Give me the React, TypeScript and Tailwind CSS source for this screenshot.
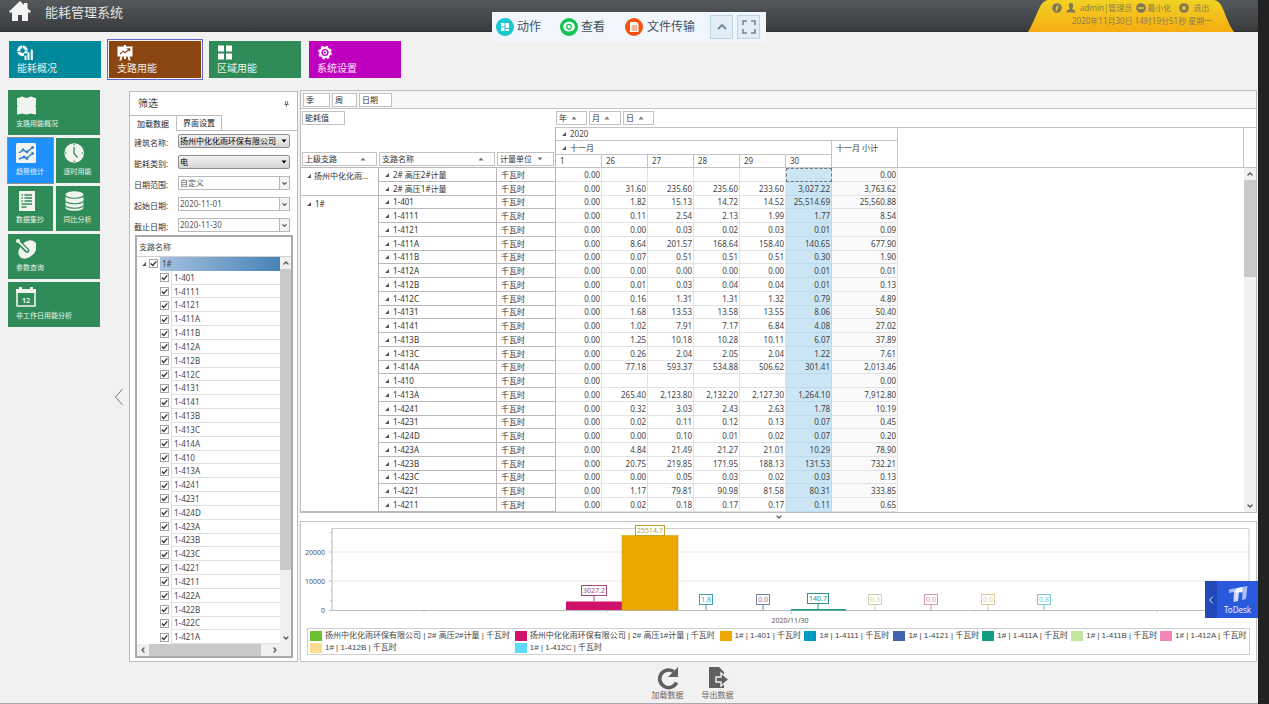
import React from 'react';
import { ChevronDown, ChevronLeft, ChevronRight, ChevronUp } from 'lucide-react';
import clsx from 'clsx';

interface PivotRow {
  name: string;
  values: string[];
}

const DAYS = ['1', '26', '27', '28', '29', '30'];

// values: one per day column, then the month subtotal
const ROWS: PivotRow[] = [
  { name: '2# 高压2#计量', values: ['0.00', '', '', '', '', '', '0.00'] },
  { name: '2# 高压1#计量', values: ['0.00', '31.60', '235.60', '235.60', '233.60', '3,027.22', '3,763.62'] },
  { name: '1-401', values: ['0.00', '1.82', '15.13', '14.72', '14.52', '25,514.69', '25,560.88'] },
  { name: '1-4111', values: ['0.00', '0.11', '2.54', '2.13', '1.99', '1.77', '8.54'] },
  { name: '1-4121', values: ['0.00', '0.00', '0.03', '0.02', '0.03', '0.01', '0.09'] },
  { name: '1-411A', values: ['0.00', '8.64', '201.57', '168.64', '158.40', '140.65', '677.90'] },
  { name: '1-411B', values: ['0.00', '0.07', '0.51', '0.51', '0.51', '0.30', '1.90'] },
  { name: '1-412A', values: ['0.00', '0.00', '0.00', '0.00', '0.00', '0.01', '0.01'] },
  { name: '1-412B', values: ['0.00', '0.01', '0.03', '0.04', '0.04', '0.01', '0.13'] },
  { name: '1-412C', values: ['0.00', '0.16', '1.31', '1.31', '1.32', '0.79', '4.89'] },
  { name: '1-4131', values: ['0.00', '1.68', '13.53', '13.58', '13.55', '8.06', '50.40'] },
  { name: '1-4141', values: ['0.00', '1.02', '7.91', '7.17', '6.84', '4.08', '27.02'] },
  { name: '1-413B', values: ['0.00', '1.25', '10.18', '10.28', '10.11', '6.07', '37.89'] },
  { name: '1-413C', values: ['0.00', '0.26', '2.04', '2.05', '2.04', '1.22', '7.61'] },
  { name: '1-414A', values: ['0.00', '77.18', '593.37', '534.88', '506.62', '301.41', '2,013.46'] },
  { name: '1-410', values: ['0.00', '', '', '', '', '', '0.00'] },
  { name: '1-413A', values: ['0.00', '265.40', '2,123.80', '2,132.20', '2,127.30', '1,264.10', '7,912.80'] },
  { name: '1-4241', values: ['0.00', '0.32', '3.03', '2.43', '2.63', '1.78', '10.19'] },
  { name: '1-4231', values: ['0.00', '0.02', '0.11', '0.12', '0.13', '0.07', '0.45'] },
  { name: '1-424D', values: ['0.00', '0.00', '0.10', '0.01', '0.02', '0.07', '0.20'] },
  { name: '1-423A', values: ['0.00', '4.84', '21.49', '21.27', '21.01', '10.29', '78.90'] },
  { name: '1-423B', values: ['0.00', '20.75', '219.85', '171.95', '188.13', '131.53', '732.21'] },
  { name: '1-423C', values: ['0.00', '0.00', '0.05', '0.03', '0.02', '0.03', '0.13'] },
  { name: '1-4221', values: ['0.00', '1.17', '79.81', '90.98', '81.58', '80.31', '333.85'] },
  { name: '1-4211', values: ['0.00', '0.02', '0.18', '0.17', '0.17', '0.11', '0.65'] },
];

const BRANCHES = [...ROWS.slice(2).map((r) => r.name), '1-422A', '1-422B', '1-422C', '1-421A'];

const LEGEND = [
  { label: '扬州中化化雨环保有限公司 | 2# 高压2#计量 | 千瓦时', color: 'bg-[#69c02c]' },
  { label: '扬州中化化雨环保有限公司 | 2# 高压1#计量 | 千瓦时', color: 'bg-[#d1126b]' },
  { label: '1# | 1-401 | 千瓦时', color: 'bg-[#eaa800]' },
  { label: '1# | 1-4111 | 千瓦时', color: 'bg-[#009bc4]' },
  { label: '1# | 1-4121 | 千瓦时', color: 'bg-[#4464b0]' },
  { label: '1# | 1-411A | 千瓦时', color: 'bg-[#149d86]' },
  { label: '1# | 1-411B | 千瓦时', color: 'bg-[#c2e5a0]' },
  { label: '1# | 1-412A | 千瓦时', color: 'bg-[#f287b7]' },
  { label: '1# | 1-412B | 千瓦时', color: 'bg-[#fbdc8c]' },
  { label: '1# | 1-412C | 千瓦时', color: 'bg-[#5cdbfd]' },
];

const CHART_LABELS = [
  { x: 594, y: 585, w: 26, stem: 601, text: '3027.2', color: '#a34a75' },
  { x: 650, y: 525, w: 30, stem: 535, text: '25514.7', color: '#c3a02a' },
  { x: 706, y: 594, w: 14, stem: 610, text: '1.8', color: '#3f9fb2' },
  { x: 763, y: 594, w: 14, stem: 610, text: '0.0', color: '#7580ab' },
  { x: 818, y: 593, w: 22, stem: 609, text: '140.7', color: '#32907f' },
  { x: 875, y: 594, w: 14, stem: 610, text: '0.3', color: '#c5d1b1' },
  { x: 931, y: 594, w: 14, stem: 610, text: '0.0', color: '#d495ae' },
  { x: 988, y: 594, w: 14, stem: 610, text: '0.0', color: '#dccd97' },
  { x: 1044, y: 594, w: 14, stem: 610, text: '0.8', color: '#7cc6d4' },
];

const SORT_UP = (
  <svg viewBox="0 0 6 4" className="h-1 w-1.5 shrink-0" fill="#777">
    <path d="M3 0.500L5.500 3.500h-5z" />
  </svg>
);

const SORT_DOWN = (
  <svg viewBox="0 0 6 4" className="h-1 w-1.5 shrink-0" fill="#777">
    <path d="M0.500 0.500h5L3 3.500z" />
  </svg>
);

const Expander = () => (
  <svg viewBox="0 0 5 5" className="h-1 w-1 shrink-0" fill="#555">
    <path d="M5 0v5H0z" />
  </svg>
);

const Header = () => (
  <header className="relative flex h-8 items-start bg-gradient-to-b from-[#55585b] to-[#3a3c3e] border-b border-[#2c2d2e] pl-2">
    <svg viewBox="0 0 24 22" className="h-[22px] w-6" fill="#f4f4f4">
      <path d="M12 1L1 11.500l1.600 1.600L4 12v9h6v-6h4v6h6v-9l1.400 1.100L23 11.500l-3.500-3.300V3h-3.500v2z" />
    </svg>
    <h1 className="ml-[13px] mt-[3px] text-[13px] leading-[18px] text-[#e4e4e4]">能耗管理系统</h1>

    <div className="absolute right-6 top-0 h-8 w-[206px]">
      <svg viewBox="0 0 206 32" className="absolute inset-0 h-full w-full" preserveAspectRatio="none">
        <defs>
          <linearGradient id="tab" x1="0" y1="0" x2="0" y2="1">
            <stop offset="0" stopColor="#f2d223" />
            <stop offset="1" stopColor="#f5ac12" />
          </linearGradient>
        </defs>
        <path d="M0 32C6 22 9 12 13 5C15 2 17 0 21 0H185C189 0 191 2 193 5C197 12 200 24 206 32z" fill="url(#tab)" />
      </svg>
      <div className="relative flex h-4 items-center pl-6 text-[8px] text-[#8b7d4c]">
        <svg viewBox="0 0 10 10" className="h-2.5 w-2.5">
          <circle cx="5" cy="5" r="4.800" fill="#80775a" />
          <path d="M6 2.200L4 8M5.500 4.200H4.200" stroke="#f2cc25" strokeWidth="1.300" />
        </svg>
        <svg viewBox="0 0 10 10" className="ml-1 h-2.5 w-2.5" fill="#80775a">
          <path d="M5 0c1.700 0 2.400 1.200 2.200 2.700C7 4.200 6.500 5 6.200 5.500c0 1 3.300 1.200 3.300 4H.5c0-2.800 3.300-3 3.300-4C3.500 5 3 4.200 2.800 2.700 2.600 1.200 3.300 0 5 0z" />
        </svg>
        <span className="ml-1 whitespace-nowrap">admin|管理员</span>
        <button type="button" className="ml-1 flex items-center whitespace-nowrap">
          <svg viewBox="0 0 10 10" className="mr-px h-2.5 w-2.5">
            <circle cx="5" cy="5" r="4.800" fill="#80775a" />
            <path d="M2.300 5h5.400" stroke="#f2cc25" strokeWidth="1.600" />
          </svg>
          最小化
        </button>
        <button type="button" className="ml-2 flex items-center whitespace-nowrap">
          <svg viewBox="0 0 10 10" className="mr-1 h-2.5 w-2.5">
            <circle cx="5" cy="5" r="4.800" fill="#80775a" />
            <path d="M3.200 3.200l3.600 3.600M6.800 3.200L3.200 6.800" stroke="#f2cc25" strokeWidth="1.400" />
          </svg>
          退出
        </button>
      </div>
      <p className="relative whitespace-nowrap pl-11 text-[8px] leading-[10px] text-[#8b7d4c]">
        2020年11月30日 14时19分51秒 星期一
      </p>
    </div>

    <RemoteBar />
  </header>
);

// floating toolbar of the remote session
const RemoteBar = () => (
  <div className="absolute left-1/2 top-3 z-10 flex h-[30px] w-[274px] -translate-x-1/2 items-center bg-[#f1f6fd] pl-1 text-[12px] text-[#44525e]">
    <button type="button" className="flex items-center gap-[3px] whitespace-nowrap">
      <svg viewBox="0 0 18 18" className="h-[18px] w-[18px]">
        <circle cx="9" cy="9" r="9" fill="#16c8cf" />
        <path d="M5 5h3.500v3.500H5zM9.500 5H13v5H9.500zM5 9.500h3.500V13H5zM9.500 11H13v2H9.500z" fill="#fff" />
      </svg>
      动作
    </button>
    <button type="button" className="ml-[19px] flex items-center gap-[3px] whitespace-nowrap">
      <svg viewBox="0 0 18 18" className="h-[18px] w-[18px]">
        <circle cx="9" cy="9" r="9" fill="#12c452" />
        <ellipse cx="9" cy="8.700" rx="5.800" ry="4.900" fill="#fff" />
        <circle cx="9" cy="8.700" r="2.300" fill="#fff" stroke="#12c452" strokeWidth="1.300" />
      </svg>
      查看
    </button>
    <button type="button" className="ml-5 flex items-center gap-1 whitespace-nowrap">
      <svg viewBox="0 0 18 18" className="h-[18px] w-[18px]">
        <circle cx="9" cy="9" r="9" fill="#f1540f" />
        <path d="M5 4h6.500L13.500 6v8H5z" fill="#fff" />
        <path d="M6.500 8h5.500M6.500 10h5.500M6.500 12h5.500" stroke="#f1540f" strokeWidth="0.900" />
      </svg>
      文件传输
    </button>
    <button type="button" aria-label="收起" className="ml-auto flex h-6 w-[23px] items-center justify-center border border-[#bcd3e3] bg-[#e2edf6]">
      <svg viewBox="0 0 12 8" className="h-2 w-3" fill="none" stroke="#6d8798" strokeWidth="1.800">
        <path d="M2 6l4-4 4 4" />
      </svg>
    </button>
    <button type="button" aria-label="全屏" className="ml-1 mr-1.5 flex h-6 w-[23px] items-center justify-center border border-[#bcd3e3] bg-[#e2edf6]">
      <svg viewBox="0 0 14 14" className="h-3.5 w-3.5" fill="none" stroke="#6d8798" strokeWidth="1.600">
        <path d="M1 5V1h4M9 1h4v4M13 9v4H9M5 13H1V9" />
      </svg>
    </button>
  </div>
);

interface TopTileProps {
  label: string;
  className: string;
  active?: boolean;
  children: React.ReactNode;
}

const TopTile: React.FC<TopTileProps> = ({ label, className, active, children }) => (
  <button
    type="button"
    className={clsx(
      'flex h-[37px] w-[92px] flex-col items-start pl-2 pt-1 text-[10px] leading-[14px] text-white/90',
      active && 'outline-1 outline-offset-1 outline-[#6467cc]',
      className
    )}
  >
    <svg viewBox="0 0 16 16" className="h-4 w-4 shrink-0" fill="#fff">
      {children}
    </svg>
    {label}
  </button>
);

const TopNav = () => (
  <nav className="flex gap-2 pb-3 pl-[9px] pr-2 pt-[9px]">
    <TopTile label="能耗概况" className="bg-[#00889b]">
      <circle cx="5.500" cy="5.700" r="3.900" fill="none" stroke="#fff" strokeWidth="3" />
      <path d="M5.500 0v4M11 5.700H7.500M0 6.500h3.500" stroke="#00889b" strokeWidth="0.700" />
      <path d="M7 8.500h9V16H7z" fill="#00889b" />
      <path d="M7.500 10.500h2V15h-2zM10.500 7.500h2V15h-2zM13.700 4.500h2.100V15h-2.100z" />
    </TopTile>
    <TopTile label="支路用能" className="bg-[#8b4510]" active>
      <path d="M0.500 1.500h6.500V0h2v1.500h6.500V11.500H0.500zM3.500 11.500h2L4.300 15.500h-2zM10.500 11.500h2l1.200 4h-2zM7 11.500h2V14H7z" />
      <path d="M3 9l3.200-2.800 2 1.500L12.500 4M9.800 3.700h2.900v2.600" fill="none" stroke="#8b4510" strokeWidth="1.100" />
    </TopTile>
    <TopTile label="区域用能" className="bg-[#2f8c58]">
      <path d="M1 0.500h6v6H1zM9 0.500h6v6H9zM1 8.500h6v6H1zM9 8.500h6v6H9z" />
    </TopTile>
    <TopTile label="系统设置" className="bg-[#be00be]">
      <circle cx="8" cy="7.500" r="4.700" fill="none" stroke="#fff" strokeWidth="2.200" />
      <circle cx="8" cy="7.500" r="6.100" fill="none" stroke="#fff" strokeWidth="1.600" strokeDasharray="2.500 2.290" />
      <circle cx="8" cy="7.500" r="1.600" fill="none" stroke="#fff" strokeWidth="1.200" />
    </TopTile>
  </nav>
);

interface SideTileProps {
  label: string;
  wide?: boolean;
  active?: boolean;
  children: React.ReactNode;
}

const SideTile: React.FC<SideTileProps> = ({ label, wide, active, children }) => (
  <button
    type="button"
    className={clsx(
      'flex h-[45px] flex-col items-start pl-2 pt-[5px] text-[7px] leading-[9px] text-white/90 whitespace-nowrap',
      wide && 'col-span-2',
      active ? 'bg-[#1e90ff] outline-1 outline-[#8a8f94]' : 'bg-[#2f8c58]'
    )}
  >
    <svg viewBox="0 0 20 20" className="mb-1 h-5 w-5 shrink-0" fill="#f1f3ef">
      {children}
    </svg>
    {label}
  </button>
);

const SideNav = () => (
  <nav className="grid w-[92px] shrink-0 grid-cols-2 content-start gap-[3px]">
    <SideTile label="支路用能概况" wide>
      <path d="M1 3c3 0 4-1.500 5-1.500S9 3 10.500 3 14 1.500 15 1.500 17.500 3 20 3v7l-.800 1 .800 1v7.500c-2.500 0-4-1-5-1s-3 1-4.500 1-3.500-1-4.500-1-2 1-5 1V12l.800-1L1 10z" />
    </SideTile>
    <SideTile label="趋势统计" active>
      <rect width="20" height="20" rx="1.500" />
      <path d="M3 10l4-3 4 2 6-5M3 16l5-2 3 1 6-5" fill="none" stroke="#2f7fcd" strokeWidth="1.400" />
      <g fill="#2f7fcd">
        <circle cx="7" cy="7" r="1.400" />
        <circle cx="11" cy="9" r="1.400" />
        <circle cx="16.500" cy="4.500" r="1.400" />
        <circle cx="8" cy="14" r="1.400" />
        <circle cx="11" cy="15.500" r="1.400" />
        <circle cx="16.500" cy="10.500" r="1.400" />
      </g>
    </SideTile>
    <SideTile label="逐时用能">
      <circle cx="10.200" cy="10" r="9.800" />
      <path d="M10 4v6.500l3.500 4" fill="none" stroke="#2f8c58" strokeWidth="1.300" />
      <path d="M10.200 1v1.500M10.200 17.500V19M1.200 10h1.500M17.500 10H19" stroke="#2f8c58" strokeWidth="1" />
    </SideTile>
    <SideTile label="数据集抄">
      <path d="M3 0h16v20H3z" />
      <path d="M5.500 4h1.500M8.500 4H16M5.500 7h1.500M8.500 7H16M5.500 10h1.500M8.500 10H16M5.500 13H16M5.500 16h5" stroke="#2f8c58" strokeWidth="1.300" />
    </SideTile>
    <SideTile label="同比分析">
      <ellipse cx="10.500" cy="3.500" rx="9" ry="3.300" />
      <path d="M1.500 5.500c2 3 16 3 18 0v4c-2 3.500-16 3.500-18 0zM1.500 11c2 3 16 3 18 0v3c-2 3.500-16 3.500-18 0zM1.500 15.500c2 3 16 3 18 0v1.500c-2 3.800-16 3.800-18 0z" />
    </SideTile>
    <SideTile label="参数查询" wide>
      <ellipse cx="11.500" cy="10.500" rx="10.500" ry="7.500" transform="rotate(-45 11.500 10.500)" />
      <path d="M1.500 2L11 11.500" stroke="#2f8c58" strokeWidth="4.600" strokeLinecap="round" />
      <path d="M1.800 2L11 11.200" stroke="#f1f3ef" strokeWidth="1.900" strokeLinecap="round" />
      <circle cx="2" cy="2" r="2" />
    </SideTile>
    <SideTile label="非工作日用能分析" wide>
      <path d="M0 2h3V0h3v2h8V0h3v2h3v4H0z" />
      <path d="M1 6v13h18V6" fill="none" stroke="#f1f3ef" strokeWidth="1.600" />
      <text x="10" y="16" textAnchor="middle" fontSize="7" fontWeight="700">12</text>
    </SideTile>
  </nav>
);

interface FilterSelectProps {
  id: string;
  label: string;
  value: string;
  raised?: boolean;
}

const FilterSelect: React.FC<FilterSelectProps> = ({ id, label, value, raised }) => (
  <div className="flex h-[21px] items-start">
    <label htmlFor={id} className="w-11 shrink-0 pt-1 leading-[10px] text-[#333]">
      {label}
    </label>
    <div className="relative h-3.5 flex-1">
      <select
        id={id}
        className={clsx(
          'block h-full w-full appearance-none border text-[8px] leading-[10px] pl-px outline-none',
          raised
            ? 'rounded-xs border-[#8d8d8d] bg-gradient-to-b from-[#f4f4f4] to-[#d4d4d4] text-black'
            : 'border-[#b9b9b9] bg-white text-[#555]'
        )}
      >
        <option>{value}</option>
      </select>
      {raised ? (
        <svg viewBox="0 0 6 4" className="pointer-events-none absolute right-[3px] top-[5px] h-1 w-1.5">
          <path d="M0.500 0.500h5L3 3.500z" />
        </svg>
      ) : (
        <span className="pointer-events-none absolute inset-y-0 right-0 flex w-[11px] items-center justify-center border border-[#b9b9b9] bg-[#f4f4f4]">
          <ChevronDown className="h-[7px] w-[7px] text-[#555]" strokeWidth={4} />
        </span>
      )}
    </div>
  </div>
);

const TreeCheck = ({ label }: { label: string }) => (
  <span className="relative h-[9px] w-[9px] shrink-0">
    <input
      type="checkbox"
      defaultChecked
      aria-label={label}
      className="peer block h-[9px] w-[9px] appearance-none border border-[#a5a5a5] bg-white"
    />
    <svg
      viewBox="0 0 9 9"
      className="pointer-events-none absolute inset-0 hidden h-[9px] w-[9px] peer-checked:block"
      fill="none"
      stroke="#333"
      strokeWidth="1.300"
    >
      <path d="M1.800 4.500l1.900 2L7.300 2.300" />
    </svg>
  </span>
);

const BranchTree = () => (
  <div className="flex min-h-0 flex-1 flex-col border-2 border-[#a9a9a9] bg-white">
    <div className="flex h-5 shrink-0 items-center border-b border-[#d0d0d0] pl-0.5 text-[#444]">支路名称</div>
    <div className="flex min-h-0 flex-1">
      <ul className="flex min-w-0 flex-1 flex-col text-[#444]">
        <li className="flex min-h-0 flex-1 items-center pl-[5px]">
          <Expander />
          <span className="ml-[3px] flex">
            <TreeCheck label="1#" />
          </span>
          <span className="ml-0.5 flex h-full flex-1 items-center bg-gradient-to-r from-[#a5c1e0] to-[#4682b4] pl-0.5">1#</span>
        </li>
        {BRANCHES.map((name) => (
          <li key={name} className="flex min-h-0 flex-1 items-center pl-[23px]">
            <TreeCheck label={name} />
            <span className="ml-0.5 flex h-full flex-1 items-center border-b border-l border-[#e0e0e0] pl-0.5 pt-px">{name}</span>
          </li>
        ))}
      </ul>
      <div className="flex w-[11px] shrink-0 flex-col items-center bg-[#f0f0f0]">
        <ChevronUp className="my-0.5 h-2 w-2 text-[#555]" strokeWidth={4} />
        <div className="w-full flex-[302] bg-[#c9c9c9]" />
        <div className="flex-[62]" />
        <ChevronDown className="my-0.5 h-2 w-2 text-[#555]" strokeWidth={4} />
      </div>
    </div>
    <div className="flex h-3 shrink-0 items-center bg-[#f0f0f0]">
      <ChevronLeft className="mx-0.5 h-2 w-2 text-[#555]" strokeWidth={4} />
      <div className="h-full flex-[112] bg-[#c9c9c9]" />
      <div className="flex-[10]" />
      <ChevronRight className="mr-3 h-2 w-2 text-[#555]" strokeWidth={4} />
    </div>
  </div>
);

const FilterPanel = () => (
  <section className="mt-px flex w-[169px] shrink-0 flex-col border border-[#bdbdbd] bg-white">
    <div className="flex h-[23px] shrink-0 items-center justify-between pl-2 pr-1 text-[10px] text-[#444]">
      <h2>筛选</h2>
      <svg viewBox="0 0 6 8" className="mr-1 h-1.5 w-[5px]" fill="none" stroke="#555">
        <path d="M1.500 1h3v3.500h-3zM0 4.500h6M3 4.500V8" />
      </svg>
    </div>
    <div className="flex h-4 shrink-0 items-end border-b border-[#bdbdbd]">
      <button type="button" className="-mb-px h-4 w-[47px] border border-b-0 border-l-0 border-[#bdbdbd] bg-white text-[8px] text-[#222]">
        加载数据
      </button>
      <button type="button" className="h-[15px] w-[45px] border border-b-0 border-l-0 border-[#bdbdbd] bg-white text-[8px] text-[#222]">
        界面设置
      </button>
    </div>
    <form className="shrink-0 pl-1 pr-[7px] pt-[3px]">
      <FilterSelect id="building" label="建筑名称:" value="扬州中化化雨环保有限公司" raised />
      <FilterSelect id="energy" label="能耗类别:" value="电" raised />
      <FilterSelect id="range" label="日期范围:" value="自定义" />
      <FilterSelect id="from" label="起始日期:" value="2020-11-01" />
      <FilterSelect id="to" label="截止日期:" value="2020-11-30" />
    </form>
    <div className="-mt-2 flex min-h-0 flex-1 flex-col pb-[3px] pl-[5px] pr-1 pt-1">
      <BranchTree />
    </div>
  </section>
);

interface FieldChipProps {
  label: string;
  className: string;
  icon?: React.ReactNode;
}

const FieldChip: React.FC<FieldChipProps> = ({ label, className, icon }) => (
  <button
    type="button"
    className={clsx('flex h-3.5 shrink-0 items-center border border-[#c2c2c2] bg-white px-0.5 text-[#333]', className)}
  >
    {label}
    {icon}
  </button>
);

const HEAD = 'border-b border-r border-[#c4c4c4] p-0 pl-1 text-left font-normal text-[#444]';
const SIDE = 'border-b border-r border-[#b8b8b8] p-0 text-left font-normal text-[#333]';

const PivotTable = () => (
  <div className="relative min-h-0 flex-1">
    <table className="h-full w-full table-fixed border-separate border-spacing-0 leading-[10px]">
      <colgroup>
        <col className="w-[78px]" />
        <col className="w-[118px]" />
        <col className="w-[59px]" />
        {DAYS.map((d) => (
          <col key={d} className="w-[46px]" />
        ))}
        <col className="w-[66px]" />
        <col />
        <col className="w-3" />
      </colgroup>
      <thead>
        <tr className="h-[14px]">
          <th colSpan={3} rowSpan={3} className="border-b border-r border-[#b8b8b8] p-0 pb-px align-bottom font-normal">
            <div className="flex gap-0.5 pl-px">
              <FieldChip label="上级支路" className="w-[75px] justify-between pr-2.5" icon={SORT_UP} />
              <FieldChip label="支路名称" className="w-[116px] justify-between pr-2.5" icon={SORT_UP} />
              <FieldChip label="计量单位" className="w-[57px] justify-between pr-2.5" icon={SORT_DOWN} />
            </div>
          </th>
          <th colSpan={7} className={clsx(HEAD, 'border-t')}>
            <span className="flex items-center gap-1 pl-0.5"><Expander />2020</span>
          </th>
          <th rowSpan={3} className={clsx(HEAD, 'border-t')} />
          <th rowSpan={3} className="border-y border-[#c4c4c4] p-0" />
        </tr>
        <tr className="h-[14px]">
          <th colSpan={6} className={HEAD}>
            <span className="flex items-center gap-1 pl-0.5"><Expander />十一月</span>
          </th>
          <th rowSpan={2} className={clsx(HEAD, 'pt-0.5 align-top')}>十一月 小计</th>
        </tr>
        <tr className="h-[13px]">
          {DAYS.map((d) => (
            <th key={d} className={HEAD}>{d}</th>
          ))}
        </tr>
      </thead>
      <tbody>
        {ROWS.map((row, i) => (
          <tr key={row.name}>
            {i === 0 && (
              <th rowSpan={2} className={clsx(SIDE, 'pl-1.5 pt-[3px] align-top')}>
                <span className="flex items-center gap-[3px] whitespace-nowrap"><Expander />扬州中化化雨...</span>
              </th>
            )}
            {i === 2 && (
              <th rowSpan={23} className={clsx(SIDE, 'pl-1.5 pt-[3px] align-top')}>
                <span className="flex items-center gap-1"><Expander />1#</span>
              </th>
            )}
            <th className={clsx(SIDE, 'pl-1.5 pt-px')}>
              <span className="flex items-center gap-1"><Expander />{row.name}</span>
            </th>
            <td className={clsx(SIDE, 'pl-1 pt-px')}>千瓦时</td>
            {row.values.map((v, c) => (
              <td
                key={c}
                className={clsx(
                  'border-b border-r p-0 pr-px pt-px text-right text-[#444]',
                  c === 5 ? 'border-[#bcdbea] bg-[#cbe5f5]' : 'border-[#e2e2e2]',
                  c === 6 && 'bg-[#fafafa]',
                  c === 5 && i === 0 && 'outline-1 -outline-offset-1 outline-dashed outline-[#777]'
                )}
              >
                {v}
              </td>
            ))}
          </tr>
        ))}
      </tbody>
    </table>
    {/* vertical scrollbar beside the body rows */}
    <div className="absolute bottom-0 right-0 top-[41px] flex w-3 flex-col items-center bg-[#f0f0f0]">
      <ChevronUp className="my-0.5 h-2 w-2 text-[#555]" strokeWidth={4} />
      <div className="w-full flex-[97] bg-[#c9c9c9]" />
      <div className="flex-[223]" />
      <ChevronDown className="my-0.5 h-2 w-2 text-[#555]" strokeWidth={4} />
    </div>
  </div>
);

const PivotPanel = () => (
  <section className="flex min-h-0 flex-1 flex-col border border-[#bdbdbd] bg-white">
    <div className="flex h-[18px] shrink-0 items-center gap-0.5 border-b border-[#c4c4c4] bg-[#f6f6f6] pl-0.5">
      <FieldChip label="季" className="w-[27px]" />
      <FieldChip label="周" className="w-[25px]" />
      <FieldChip label="日期" className="w-[33px]" />
    </div>
    <div className="flex h-[18px] shrink-0 items-center pl-px">
      <div className="w-[254px]">
        <FieldChip label="能耗值" className="w-[43px]" />
      </div>
      <div className="flex gap-0.5">
        <FieldChip label="年" className="w-[31px] gap-1" icon={SORT_UP} />
        <FieldChip label="月" className="w-[32px] gap-1" icon={SORT_UP} />
        <FieldChip label="日" className="w-[31px] gap-1" icon={SORT_UP} />
      </div>
    </div>
    <PivotTable />
  </section>
);

const BarChart = () => (
  <svg viewBox="301 522 955 106" className="block h-auto w-full" fontSize="8" fill="#555">
    <path d="M332 552H1249M332 581H1249" stroke="#ececec" />
    <path d="M332 528.500H1249V610" fill="none" stroke="#cfcfcf" />
    <path d="M332 528V610.500H1249M329 552h3M329 581h3M329 610.500h3M330.500 532.500h1.500M330.500 542h1.500M330.500 561.500h1.500M330.500 571h1.500M330.500 590.500h1.500M330.500 600.500h1.500" fill="none" stroke="#bbb" />
    <path d="M424 610v2M607 610v2M791 610v4M974 610v2M1157 610v2" stroke="#bbb" />
    <text x="325" y="555" textAnchor="end" fontSize="7">20000</text>
    <text x="325" y="584" textAnchor="end" fontSize="7">10000</text>
    <text x="325" y="613" textAnchor="end" fontSize="7">0</text>
    <rect x="566" y="601.500" width="56" height="8.500" fill="#d1126b" />
    <rect x="622" y="535.500" width="56" height="74.500" fill="#eaa800" stroke="#cf9500" strokeWidth="0.500" />
    <rect x="791" y="609" width="55" height="1.500" fill="#149d86" />
    {CHART_LABELS.map((l) => (
      <g key={l.x}>
        <path d={`M${l.x} ${l.y + 10}V${l.stem}`} stroke={l.color} />
        <rect x={l.x - l.w / 2 + 0.5} y={l.y + 0.5} width={l.w - 1} height="10" fill="#fff" stroke={l.color} />
        <text x={l.x} y={l.y + 8} textAnchor="middle" fontSize="7" fill={l.color}>{l.text}</text>
      </g>
    ))}
    <text x="790" y="623" textAnchor="middle" fontSize="7">2020/11/30</text>
  </svg>
);

const ChartPanel = () => (
  <section className="shrink-0 border border-[#c4c4c4] bg-white">
    <BarChart />
    <ul className="mx-1.5 mb-1.5 grid h-[27px] grid-cols-[205fr_205fr_85fr_89fr_89fr_89fr_89fr_89fr] content-center gap-y-0.5 border border-[#cfcfcf] pl-0.5 leading-[10px] text-[#444]">
      {LEGEND.map((item) => (
        <li key={item.label} className="flex items-center gap-[3px] whitespace-nowrap font-['Liberation_Sans','Noto_Sans_CJK_SC',sans-serif]">
          <span className={clsx('h-2.5 w-3 shrink-0', item.color)} />
          {item.label}
        </li>
      ))}
    </ul>
  </section>
);

const Footer = () => (
  <footer className="flex h-[41px] shrink-0 items-start justify-center gap-[18px] pr-0.5 pt-1 leading-[10px] text-[#666]">
    <button type="button" className="flex flex-col items-center">
      <svg viewBox="0 0 24 24" className="h-6 w-6">
        <path d="M20.500 16.500A8.800 8.800 0 1 1 17.500 5.500" fill="none" stroke="#606060" strokeWidth="3.600" />
        <path d="M22 1v10H12z" fill="#606060" />
      </svg>
      加载数据
    </button>
    <button type="button" className="flex flex-col items-center">
      <svg viewBox="0 0 24 24" className="h-6 w-6">
        <path d="M3 1h10l5 5v16H3z" fill="#606060" />
        <path d="M10 11h5V7l8 6.500-8 6.500v-4h-5z" fill="#606060" stroke="#f1f1f1" strokeWidth="1.400" />
      </svg>
      导出数据
    </button>
  </footer>
);

const ToDeskWidget = () => (
  <button type="button" className="absolute right-0 top-[581px] z-10 flex h-[37px] w-[53px] bg-[#2b59dd] text-[8px] leading-[10px] text-white/90">
    <span className="flex h-full w-3 items-center justify-center bg-[#2349b8]">
      <ChevronLeft className="h-3 w-3" />
    </span>
    <span className="flex flex-1 flex-col items-center pt-1">
      <svg viewBox="0 0 20 18" className="mb-0.5 h-[18px] w-5">
        <path d="M1 4.500L9 3l-.500 4H5.500L1 8z" fill="#a9bdf5" />
        <path d="M6 5.500l5-2V8L10 16l-4.500 1z" fill="#cfdbfb" />
        <path d="M9 3l10.500-2-1.500 13-4 1 .500-7.500H9z" fill="#a9bdf5" />
        <path d="M8 3.500L14.500 2v4.500L8 8z" fill="#f3f6ff" />
      </svg>
      ToDesk
    </span>
  </button>
);

const App: React.FC = () => {
  return (
    <div className="flex h-screen bg-[#222] font-['Noto_Sans','Noto_Sans_CJK_SC',sans-serif] text-[8px]">
      <div className="relative flex min-w-0 flex-1 flex-col border-b border-[#aaa] bg-[#f1f1f1]">
        <Header />
        <TopNav />
        <div className="flex min-h-0 flex-1 pl-2">
          <SideNav />
          <button type="button" aria-label="折叠" className="flex w-[29px] shrink-0 items-center justify-center">
            <svg viewBox="0 0 10 18" className="ml-2 h-[18px] w-2.5" fill="none" stroke="#777">
              <path d="M8.500 1L1.500 9l7 8" />
            </svg>
          </button>
          <div className="flex min-w-0 flex-1 flex-col">
            <div className="flex min-h-0 flex-1 gap-0.5">
              <FilterPanel />
              <main className="mr-px flex min-w-0 flex-1 flex-col">
                <PivotPanel />
                <div className="flex h-2 shrink-0 items-center justify-center bg-white">
                  <ChevronDown className="h-2 w-2 text-[#666]" strokeWidth={4} />
                </div>
                <ChartPanel />
              </main>
            </div>
            <Footer />
          </div>
        </div>
        <ToDeskWidget />
      </div>
      <div className="w-[11px] shrink-0" />
    </div>
  );
};

export default App;
